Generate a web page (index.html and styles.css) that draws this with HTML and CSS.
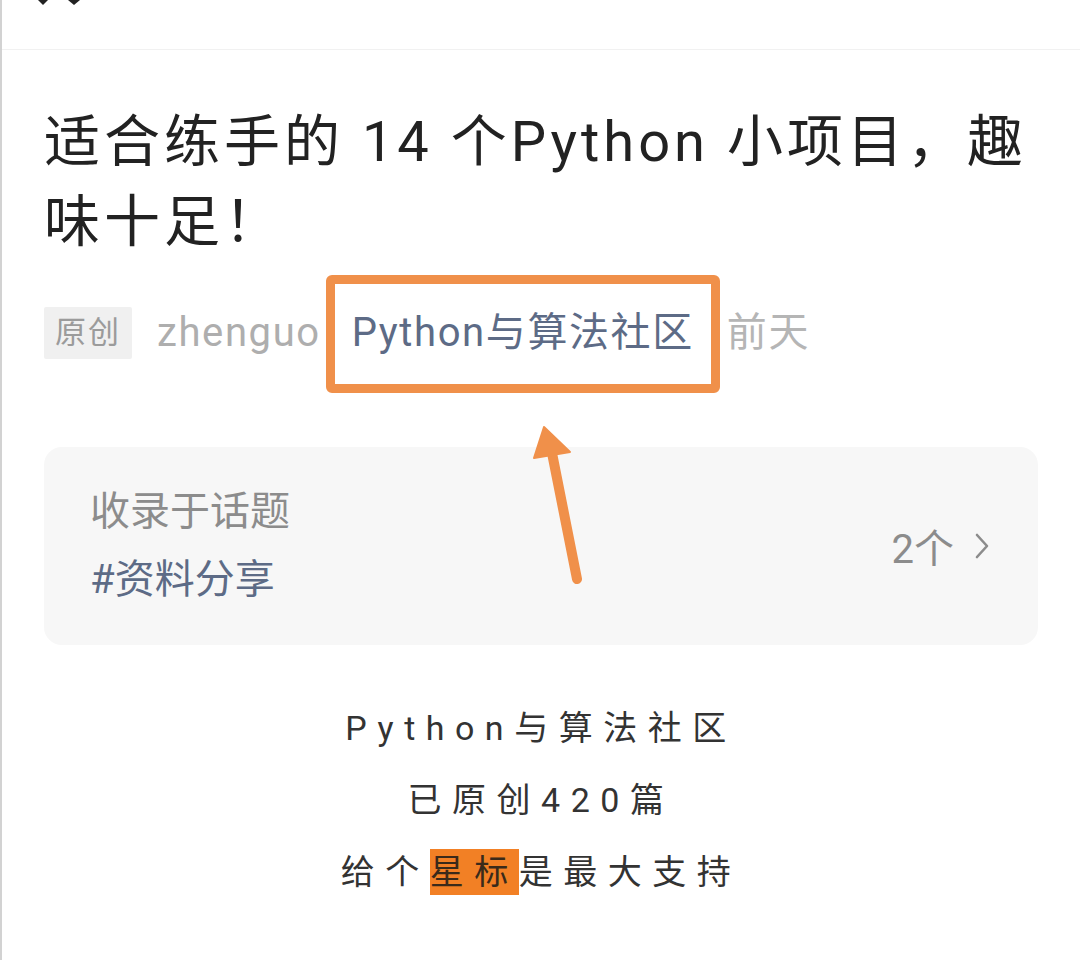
FILE: index.html
```html
<!DOCTYPE html>
<html lang="zh-CN">
<head>
<meta charset="utf-8">
<title>适合练手的 14 个Python 小项目，趣味十足！</title>
<link rel="stylesheet" href="styles.css">
</head>
<body>
<div class="page">
  <header class="topbar">
    <svg class="top-icon" width="60" height="8" viewBox="0 0 60 8">
      <path d="M2 0 L12 0 L7 5 Z" fill="#222"/>
      <path d="M32 0 L44 0 L38 5 Z" fill="#222"/>
    </svg>
  </header>
  <main class="article">
    <h1 class="title">适合练手的 14 个Python 小项目，趣味十足！</h1>
    <div class="meta">
      <span class="tag">原创</span>
      <span class="author">zhenguo</span>
      <span class="account">Python与算法社区<span class="mark-box"></span>
        <svg class="mark-arrow" width="80" height="180" viewBox="0 0 80 180">
          <line x1="55" y1="162" x2="30" y2="36" stroke="#f0904a" stroke-width="10" stroke-linecap="round"/>
          <polygon points="22,10 12,41 48,35" fill="#f0904a" stroke="#f0904a" stroke-width="2" stroke-linejoin="round"/>
        </svg>
      </span>
      <span class="time">前天</span>
    </div>
    <section class="topic-card">
      <div class="topic-left">
        <div class="topic-label">收录于话题</div>
        <div class="topic-name">#资料分享</div>
      </div>
      <div class="topic-count">2个<svg class="chev" width="16" height="28" viewBox="0 0 16 28"><polyline points="3,3 13,14 3,25" fill="none" stroke="#8c8c8c" stroke-width="2.6" stroke-linecap="round" stroke-linejoin="round"/></svg></div>
    </section>
    <section class="promo">
      <p>Python与算法社区</p>
      <p>已原创420篇</p>
      <p>给个<span class="hl">星标</span>是最大支持</p>
    </section>
  </main>
</div>
</body>
</html>
```
FILE: styles.css
```css
* { box-sizing: border-box; }
html, body { margin: 0; padding: 0; background: #fff; }
body {
  font-family: Roboto, "Noto Sans CJK SC", sans-serif;
  width: 1080px;
  height: 960px;
  overflow: hidden;
}
.page {
  border-left: 2px solid #d2d2d2;
  height: 960px;
}
.topbar {
  height: 50px;
  border-bottom: 1px solid #f1f1f1;
  position: relative;
}
.top-icon {
  position: absolute;
  left: 34px;
  top: 0;
}
.article {
  padding: 0 42px 0 42px;
}
.title {
  margin: 52px 0 0 0;
  font-size: 56px;
  font-weight: 400;
  letter-spacing: 4px;
  line-height: 80px;
  color: #222;
}
.meta {
  display: flex;
  align-items: center;
  margin-top: 45px;
  height: 52px;
  font-size: 40px;
  letter-spacing: 1.6px;
  line-height: 52px;
}
.tag {
  background: #f0f0f0;
  color: #9b9b9b;
  font-size: 31px;
  letter-spacing: 2px;
  height: 52px;
  line-height: 52px;
  padding: 0 11px 0 11px;
  border-radius: 2px;
}
.author {
  color: #aeaeae;
  margin-left: 25px;
}
.account {
  position: relative;
  display: block;
  height: 52px;
  color: #5d6b86;
  margin-left: 31px;
}
.mark-box {
  position: absolute;
  left: -26px;
  right: -26px;
  top: -32px;
  bottom: -34px;
  border: 9px solid #f0904a;
  border-radius: 6px;
}
.mark-arrow {
  position: absolute;
  left: 170px;
  top: 110px;
}
.time {
  color: #b5b5b5;
  margin-left: 33px;
}
.topic-card {
  margin-top: 88px;
  background: #f7f7f7;
  border-radius: 18px;
  padding: 0 48px 0 46px;
  display: flex;
  align-items: center;
  justify-content: space-between;
  height: 198px;
}
.topic-left {
  display: flex;
  flex-direction: column;
  gap: 20px;
}
.topic-label {
  color: #8c8c8c;
  font-size: 40px;
  line-height: 48px;
}
.topic-name {
  color: #5d6b86;
  font-size: 40px;
  line-height: 48px;
}
.topic-count {
  color: #8c8c8c;
  font-size: 40px;
  display: flex;
  align-items: center;
}
.chev {
  margin-left: 20px;
}
.promo {
  margin-top: 47px;
  text-align: center;
  color: #333;
  font-size: 34px;
  letter-spacing: 10.5px;
}
.promo p {
  margin: 0;
  line-height: 72px;
}
.hl {
  background: #f28025;
  color: #3a2a1a;
  padding: 3px 0;
}
```
